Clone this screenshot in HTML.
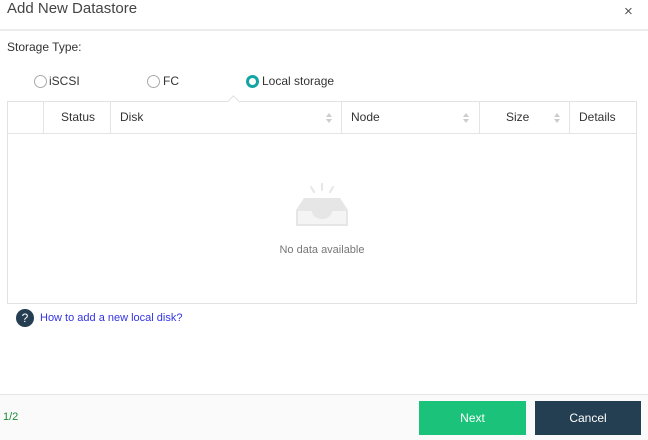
<!DOCTYPE html><html><head><style>
body{margin:0;width:648px;height:439px;background:#fff;font-family:"Liberation Sans",sans-serif;position:relative;overflow:hidden;color:#333}
.a{position:absolute}
.th{position:absolute;top:0;height:31px;line-height:31px;font-size:12px;color:#333}
.vl{position:absolute;top:0;width:1px;height:31px;background:#e4e4e4}
.sort{position:absolute;top:11px;width:0;height:0;border-left:3.5px solid transparent;border-right:3.5px solid transparent}
.radio{position:absolute;width:11px;height:11px;border:1px solid #aaa;border-radius:50%;background:#fff}
</style></head><body>
<div class="a" style="left:7px;top:0;font-size:15px;color:#444">Add New Datastore</div>
<div class="a" style="left:624px;top:3px;font-size:15px;color:#555">×</div>
<div class="a" style="left:0;top:29px;width:648px;height:2px;background:#ececec"></div>
<div class="a" style="left:7px;top:40px;font-size:12px;color:#333">Storage Type:</div>
<div class="radio" style="left:34px;top:75px"></div><div class="a" style="left:49px;top:74px;font-size:12px">iSCSI</div>
<div class="radio" style="left:147px;top:75px"></div><div class="a" style="left:163px;top:74px;font-size:12px">FC</div>
<div class="radio" style="left:246px;top:75px;border:3px solid #13a5a3;width:7px;height:7px"></div><div class="a" style="left:262px;top:74px;font-size:12px">Local storage</div>
<div class="a" style="left:7px;top:101px;width:628px;height:201px;border:1px solid #e2e2e2">
<div class="a" style="left:0;top:31px;width:628px;height:1px;background:#e4e4e4"></div>
<div class="a" style="left:221px;top:-5px;width:8px;height:8px;background:#fff;border-left:1px solid #e2e2e2;border-top:1px solid #e2e2e2;transform:rotate(45deg)"></div>
<div class="vl" style="left:35px"></div><div class="vl" style="left:102px"></div><div class="vl" style="left:333px"></div><div class="vl" style="left:471px"></div><div class="vl" style="left:561px"></div>
<div class="th" style="left:53px">Status</div>
<div class="th" style="left:112px">Disk</div>
<div class="th" style="left:343px">Node</div>
<div class="th" style="left:498px">Size</div>
<div class="th" style="left:571px">Details</div>
<div class="sort" style="left:318px;border-bottom:4px solid #ccc"></div><div class="sort" style="left:318px;top:17px;border-top:4px solid #ccc"></div>
<div class="sort" style="left:455px;border-bottom:4px solid #ccc"></div><div class="sort" style="left:455px;top:17px;border-top:4px solid #ccc"></div>
<div class="sort" style="left:546px;border-bottom:4px solid #ccc"></div><div class="sort" style="left:546px;top:17px;border-top:4px solid #ccc"></div>
<svg class="a" style="left:284px;top:80px" width="60" height="46" viewBox="0 0 60 46">
<g stroke="#e6e6e6" stroke-width="2" stroke-linecap="round"><line x1="30" y1="2" x2="30" y2="8"/><line x1="19" y1="5" x2="22" y2="10"/><line x1="41" y1="5" x2="38" y2="10"/></g>
<path d="M12 16 H48 L56 28 V44 H4 V28 Z" fill="#e6e6e6"/>
<path d="M6 29 H20 A10 8 0 0 0 40 29 H54 V42 H6 Z" fill="#f4f4f4"/>
</svg>
<div class="a" style="left:0;top:142px;width:628px;text-align:center;font-size:11px;color:#777">No data available</div>
</div>
<div class="a" style="left:16px;top:309px;width:18px;height:18px;border-radius:50%;background:#253e52;color:#fff;font-size:12px;text-align:center;line-height:18px">?</div>
<div class="a" style="left:40px;top:312px;font-size:11px;color:#3333e6">How to add a new local disk?</div>
<div class="a" style="left:0;top:394px;width:648px;height:45px;background:#fafafa;border-top:1px solid #e6e6e6"></div>
<div class="a" style="left:3px;top:411px;font-size:11px;color:#1a8c3a">1/2</div>
<div class="a" style="left:419px;top:401px;width:107px;height:34px;background:#1bc27a;color:#fff;font-size:12px;text-align:center;line-height:34px">Next</div>
<div class="a" style="left:535px;top:401px;width:106px;height:34px;background:#243f52;color:#fff;font-size:12px;text-align:center;line-height:34px">Cancel</div>
</body></html>
